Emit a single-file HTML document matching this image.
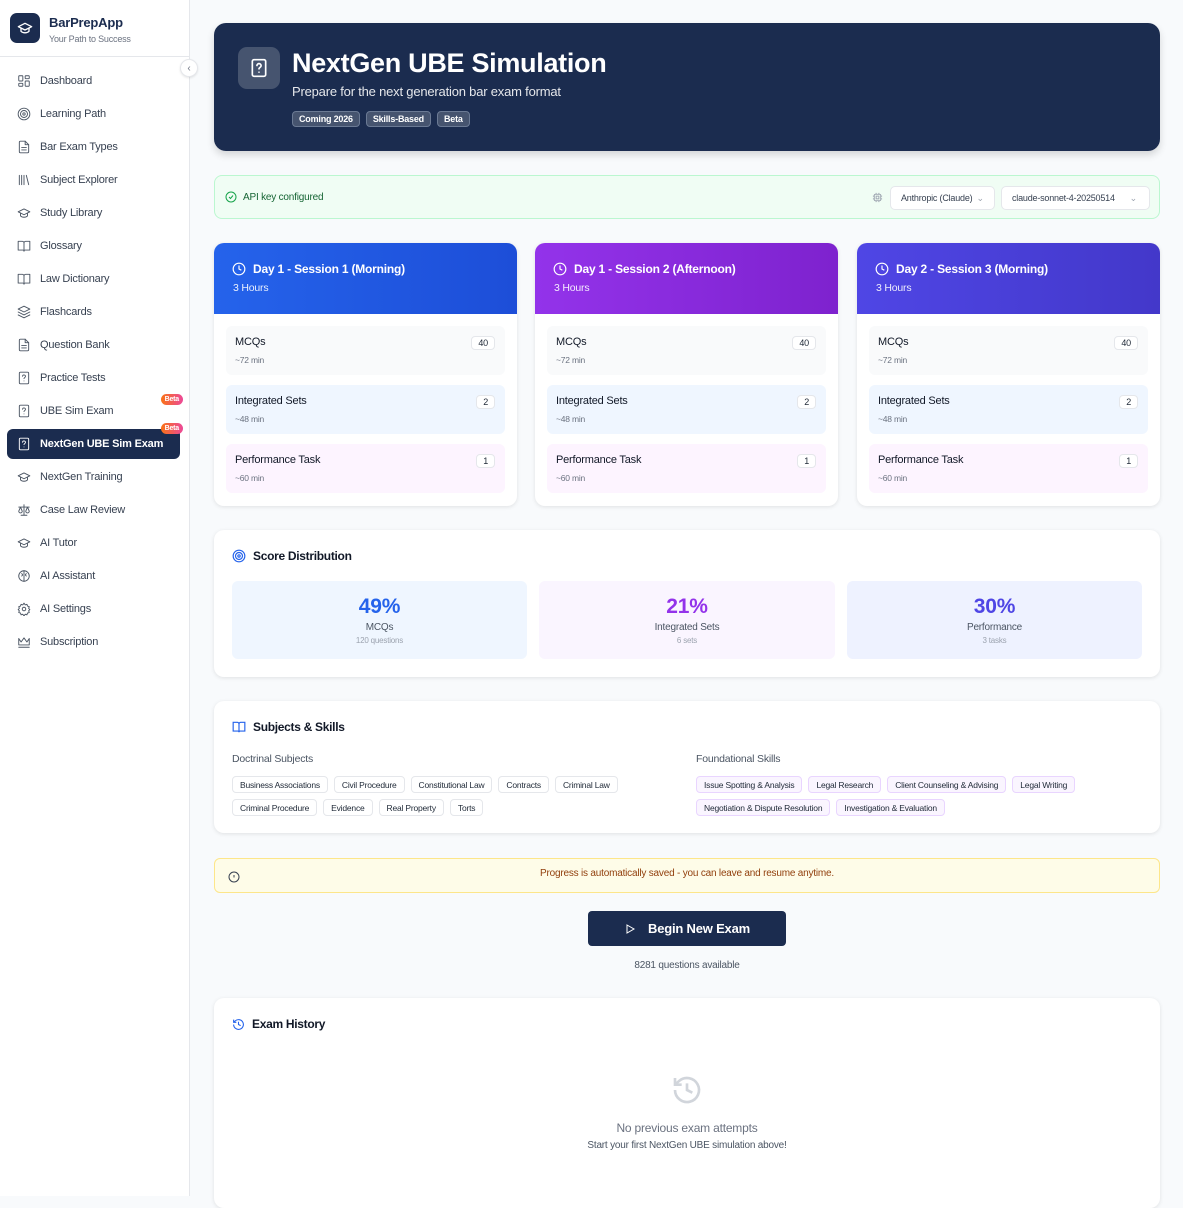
<!DOCTYPE html>
<html><head><meta charset="utf-8">
<style>
*{box-sizing:border-box;margin:0;padding:0}
body{width:1183px;height:1196px;overflow:hidden;font-family:"Liberation Sans",sans-serif;background:#f8fafc;color:#1f2937;position:relative;letter-spacing:-0.2px}
.sb{position:absolute;left:0;top:0;width:190px;height:1196px;background:#fff;border-right:1px solid #e5e7eb}
.logo{position:absolute;left:10px;top:13px;width:30px;height:30px;border-radius:7px;background:#1b2c4f;display:flex;align-items:center;justify-content:center}
.brand{position:absolute;left:49px;top:15px;font-weight:bold;font-size:13px;color:#1b2c4f}
.tag{position:absolute;left:49px;top:34px;font-size:9px;color:#6b7280}
.sep{position:absolute;left:0;top:56px;width:189px;border-top:1px solid #e5e7eb}
.coll{position:absolute;left:180px;top:59px;width:18px;height:18px;border-radius:50%;background:#fff;border:1px solid #e5e7eb;box-shadow:0 1px 2px rgba(0,0,0,.1);font-size:10px;color:#6b7280;display:flex;align-items:center;justify-content:center}
.nav{position:absolute;left:7px;width:173px;height:30px;display:flex;align-items:center;padding-left:10px;font-size:11px;color:#374151;border-radius:6px}
.nav svg{width:14px;height:14px;margin-right:9px;stroke:#4b5563;fill:none;stroke-width:1.6;stroke-linecap:round;stroke-linejoin:round}
.nav.act{background:#1b2c4f;color:#fff;font-weight:bold}
.nav.act svg{stroke:#fff}
.beta{position:absolute;right:-3px;top:-6px;background:linear-gradient(90deg,#f97316,#ec4899);color:#fff;font-size:7px;font-weight:bold;padding:2px 4px;border-radius:7px}
.hdr{position:absolute;left:214px;top:23px;width:946px;height:128px;background:#1b2c4f;border-radius:12px;box-shadow:0 4px 8px rgba(0,0,0,.15)}
.hico{position:absolute;left:24px;top:24px;width:42px;height:42px;border-radius:9px;background:#46546f;display:flex;align-items:center;justify-content:center}
.htitle{position:absolute;left:78px;top:25px;color:#fff;font-size:27px;font-weight:bold;letter-spacing:-0.3px}
.hsub{position:absolute;left:78px;top:61px;color:#e5e7eb;font-size:13px}
.pills{position:absolute;left:78px;top:88px;display:flex;gap:6px}
.pill{font-size:9px;font-weight:bold;color:#fff;background:#46546f;border:1px solid #6b7a94;border-radius:4px;padding:2px 6px}
.api{position:absolute;left:214px;top:175px;width:946px;height:44px;background:#f0fdf4;border:1px solid #bbf7d0;border-radius:8px}
.sel{position:absolute;top:10px;height:24px;background:#fff;border:1px solid #e5e7eb;border-radius:5px;font-size:9px;color:#374151;display:flex;align-items:center;padding-left:10px}
.card{position:absolute;background:#fff;border-radius:10px;box-shadow:0 1px 4px rgba(0,0,0,.1)}
.sess{top:243px;width:303px;height:263px;overflow:hidden}
.sh{height:71px;padding:19px 0 0 18px;color:#fff}
.sh b{font-size:12px;display:flex;align-items:center}
.sh b svg{margin-right:7px}
.sh div{font-size:10.5px;margin-top:6px;padding-left:1px;opacity:.9}
.it{position:absolute;left:12px;width:279px;height:49px;border-radius:6px;padding:10px 9px}
.it .n{font-size:11px;color:#111827}
.it .m{font-size:8.5px;color:#6b7280;margin-top:7px}
.it .c{position:absolute;right:10px;top:10px;font-size:9px;border:1px solid #e5e7eb;background:#fff;border-radius:4px;padding:1px 6px}
.h3{position:absolute;left:18px;top:19px;font-size:12px;font-weight:bold;color:#111827;display:flex;align-items:center;letter-spacing:-0.3px}
.h3 svg{margin-right:7px}
.sbox{position:absolute;top:51px;width:295px;height:78px;border-radius:6px;text-align:center}
.sbox .p{font-size:21px;font-weight:bold;margin-top:14px}
.sbox .l{font-size:10px;color:#4b5563;margin-top:3px}
.sbox .s{font-size:8px;color:#9ca3af;margin-top:3px}
.lab{position:absolute;top:52px;font-size:10.5px;color:#4b5563}
.chips{position:absolute;top:75px;display:flex;flex-wrap:wrap;gap:6px 6px}
.chip{font-size:8.5px;color:#1f2937;border:1px solid #e5e7eb;border-radius:4px;padding:3px 7px;background:#fff;height:17px}
.chip.v{background:#faf5ff;border-color:#e9d5ff}
</style></head><body>
<div class="sb">
<div class="logo"><svg width="16" height="16" viewBox="0 0 24 24" fill="none" stroke="#fff" stroke-width="2" stroke-linecap="round" stroke-linejoin="round"><path d="M22 10 12 5 2 10l10 5 10-5z"/><path d="M6 12v5c3 3 9 3 12 0v-5"/></svg></div>
<div class="brand">BarPrepApp</div><div class="tag">Your Path to Success</div>
<div class="sep"></div><div class="coll">‹</div>
<div class="nav" style="top:66px"><svg viewBox="0 0 24 24"><rect x="3" y="3" width="7" height="9" rx="1"/><rect x="14" y="3" width="7" height="5" rx="1"/><rect x="14" y="12" width="7" height="9" rx="1"/><rect x="3" y="16" width="7" height="5" rx="1"/></svg>Dashboard</div>
<div class="nav" style="top:99px"><svg viewBox="0 0 24 24"><circle cx="12" cy="12" r="10"/><circle cx="12" cy="12" r="6"/><circle cx="12" cy="12" r="2"/></svg>Learning Path</div>
<div class="nav" style="top:132px"><svg viewBox="0 0 24 24"><path d="M14 2H6a2 2 0 0 0-2 2v16a2 2 0 0 0 2 2h12a2 2 0 0 0 2-2V8z"/><path d="M14 2v6h6M16 13H8M16 17H8"/></svg>Bar Exam Types</div>
<div class="nav" style="top:165px"><svg viewBox="0 0 24 24"><path d="M4 4v16M8 4v16M12 4v16M16 4l4 16"/></svg>Subject Explorer</div>
<div class="nav" style="top:198px"><svg viewBox="0 0 24 24"><path d="M22 10 12 5 2 10l10 5 10-5z"/><path d="M6 12v5c3 3 9 3 12 0v-5"/></svg>Study Library</div>
<div class="nav" style="top:231px"><svg viewBox="0 0 24 24"><path d="M2 4h7a3 3 0 0 1 3 3v14a2 2 0 0 0-2-2H2zM22 4h-7a3 3 0 0 0-3 3v14a2 2 0 0 1 2-2h8z"/></svg>Glossary</div>
<div class="nav" style="top:264px"><svg viewBox="0 0 24 24"><path d="M2 4h7a3 3 0 0 1 3 3v14a2 2 0 0 0-2-2H2zM22 4h-7a3 3 0 0 0-3 3v14a2 2 0 0 1 2-2h8z"/></svg>Law Dictionary</div>
<div class="nav" style="top:297px"><svg viewBox="0 0 24 24"><path d="M12 2 2 7l10 5 10-5z"/><path d="m2 12 10 5 10-5M2 17l10 5 10-5"/></svg>Flashcards</div>
<div class="nav" style="top:330px"><svg viewBox="0 0 24 24"><path d="M14 2H6a2 2 0 0 0-2 2v16a2 2 0 0 0 2 2h12a2 2 0 0 0 2-2V8z"/><path d="M14 2v6h6M16 13H8M16 17H8"/></svg>Question Bank</div>
<div class="nav" style="top:363px"><svg viewBox="0 0 24 24"><rect x="4" y="2" width="16" height="20" rx="2"/><path d="M9.5 9a2.5 2.5 0 0 1 5 .5c0 1.5-2.5 2-2.5 3.5M12 17h.01"/></svg>Practice Tests</div>
<div class="nav" style="top:396px"><svg viewBox="0 0 24 24"><rect x="4" y="2" width="16" height="20" rx="2"/><path d="M9.5 9a2.5 2.5 0 0 1 5 .5c0 1.5-2.5 2-2.5 3.5M12 17h.01"/></svg>UBE Sim Exam<span class="beta" style="top:-2px">Beta</span></div>
<div class="nav act" style="top:429px"><svg viewBox="0 0 24 24"><rect x="4" y="2" width="16" height="20" rx="2"/><path d="M9.5 9a2.5 2.5 0 0 1 5 .5c0 1.5-2.5 2-2.5 3.5M12 17h.01"/></svg>NextGen UBE Sim Exam<span class="beta">Beta</span></div>
<div class="nav" style="top:462px"><svg viewBox="0 0 24 24"><path d="M22 10 12 5 2 10l10 5 10-5z"/><path d="M6 12v5c3 3 9 3 12 0v-5"/></svg>NextGen Training</div>
<div class="nav" style="top:495px"><svg viewBox="0 0 24 24"><path d="M12 3v18M7 21h10M3 7h18M6 7l-3 7a3 3 0 0 0 6 0zM18 7l-3 7a3 3 0 0 0 6 0z"/></svg>Case Law Review</div>
<div class="nav" style="top:528px"><svg viewBox="0 0 24 24"><path d="M22 10 12 5 2 10l10 5 10-5z"/><path d="M6 12v5c3 3 9 3 12 0v-5"/></svg>AI Tutor</div>
<div class="nav" style="top:561px"><svg viewBox="0 0 24 24"><circle cx="12" cy="12" r="9"/><path d="M12 3v18M8 8c2 1 2 3 0 4M16 8c-2 1-2 3 0 4"/></svg>AI Assistant</div>
<div class="nav" style="top:594px"><svg viewBox="0 0 24 24"><circle cx="12" cy="12" r="3"/><path d="M12 2l2 3 3-1 1 3 3 1-1 3 2 2-2 2 1 3-3 1-1 3-3-1-2 3-2-3-3 1-1-3-3-1 1-3-2-2 2-2-1-3 3-1 1-3 3 1z"/></svg>AI Settings</div>
<div class="nav" style="top:627px"><svg viewBox="0 0 24 24"><path d="M3 6l4 6 5-7 5 7 4-6v11H3zM3 21h18"/></svg>Subscription</div>
</div>

<div class="hdr">
<div class="hico"><svg width="20" height="20" viewBox="0 0 24 24" fill="none" stroke="#fff" stroke-width="2" stroke-linecap="round" stroke-linejoin="round"><rect x="4" y="2" width="16" height="20" rx="2"/><path d="M9.5 9a2.5 2.5 0 0 1 5 .5c0 1.5-2.5 2-2.5 3.5M12 17h.01"/></svg></div>
<div class="htitle">NextGen UBE Simulation</div>
<div class="hsub">Prepare for the next generation bar exam format</div>
<div class="pills"><span class="pill">Coming 2026</span><span class="pill">Skills-Based</span><span class="pill">Beta</span></div>
</div>

<div class="api">
<div style="position:absolute;left:10px;top:15px;font-size:10px;color:#166534;display:flex;align-items:center"><svg width="12" height="12" viewBox="0 0 24 24" fill="none" stroke="#16a34a" stroke-width="2"><circle cx="12" cy="12" r="10"/><path d="m8 12 3 3 5-6"/></svg><span style="margin-left:6px">API key configured</span></div>
<svg style="position:absolute;left:657px;top:16px" width="11" height="11" viewBox="0 0 24 24" fill="none" stroke="#9ca3af" stroke-width="2"><rect x="5" y="5" width="14" height="14" rx="2"/><rect x="9" y="9" width="6" height="6"/><path d="M9 2v3M15 2v3M9 19v3M15 19v3M2 9h3M2 15h3M19 9h3M19 15h3"/></svg>
<div class="sel" style="left:675px;width:105px">Anthropic (Claude) <span style="margin-left:4px;color:#9ca3af">⌄</span></div>
<div class="sel" style="left:786px;width:149px">claude-sonnet-4-20250514<span style="position:absolute;right:12px;color:#9ca3af">⌄</span></div>
</div>

<div class="card sess" style="left:214px">
<div class="sh" style="background:linear-gradient(90deg,#2563eb,#1d4ed8)"><b><svg width="14" height="14" viewBox="0 0 24 24" fill="none" stroke="#fff" stroke-width="2"><circle cx="12" cy="12" r="10"/><path d="M12 6v6l4 2"/></svg>Day 1 - Session 1 (Morning)</b><div>3 Hours</div></div>
<div class="it" style="top:83px;background:#f9fafb"><div class="n">MCQs</div><div class="m">~72 min</div><span class="c">40</span></div>
<div class="it" style="top:142px;background:#eff6ff"><div class="n">Integrated Sets</div><div class="m">~48 min</div><span class="c">2</span></div>
<div class="it" style="top:201px;background:#fdf4ff"><div class="n">Performance Task</div><div class="m">~60 min</div><span class="c">1</span></div>
</div>
<div class="card sess" style="left:535px">
<div class="sh" style="background:linear-gradient(90deg,#9333ea,#7e22ce)"><b><svg width="14" height="14" viewBox="0 0 24 24" fill="none" stroke="#fff" stroke-width="2"><circle cx="12" cy="12" r="10"/><path d="M12 6v6l4 2"/></svg>Day 1 - Session 2 (Afternoon)</b><div>3 Hours</div></div>
<div class="it" style="top:83px;background:#f9fafb"><div class="n">MCQs</div><div class="m">~72 min</div><span class="c">40</span></div>
<div class="it" style="top:142px;background:#eff6ff"><div class="n">Integrated Sets</div><div class="m">~48 min</div><span class="c">2</span></div>
<div class="it" style="top:201px;background:#fdf4ff"><div class="n">Performance Task</div><div class="m">~60 min</div><span class="c">1</span></div>
</div>
<div class="card sess" style="left:857px">
<div class="sh" style="background:linear-gradient(90deg,#4f46e5,#4338ca)"><b><svg width="14" height="14" viewBox="0 0 24 24" fill="none" stroke="#fff" stroke-width="2"><circle cx="12" cy="12" r="10"/><path d="M12 6v6l4 2"/></svg>Day 2 - Session 3 (Morning)</b><div>3 Hours</div></div>
<div class="it" style="top:83px;background:#f9fafb"><div class="n">MCQs</div><div class="m">~72 min</div><span class="c">40</span></div>
<div class="it" style="top:142px;background:#eff6ff"><div class="n">Integrated Sets</div><div class="m">~48 min</div><span class="c">2</span></div>
<div class="it" style="top:201px;background:#fdf4ff"><div class="n">Performance Task</div><div class="m">~60 min</div><span class="c">1</span></div>
</div>

<div class="card" style="left:214px;top:530px;width:946px;height:147px">
<div class="h3"><svg width="14" height="14" viewBox="0 0 24 24" fill="none" stroke="#2563eb" stroke-width="2"><circle cx="12" cy="12" r="10"/><circle cx="12" cy="12" r="6"/><circle cx="12" cy="12" r="2"/></svg>Score Distribution</div>
<div class="sbox" style="left:18px;background:#eff6ff"><div class="p" style="color:#2563eb">49%</div><div class="l">MCQs</div><div class="s">120 questions</div></div>
<div class="sbox" style="left:325px;width:296px;background:#faf5ff"><div class="p" style="color:#9333ea">21%</div><div class="l">Integrated Sets</div><div class="s">6 sets</div></div>
<div class="sbox" style="left:633px;background:#eef2ff"><div class="p" style="color:#4f46e5">30%</div><div class="l">Performance</div><div class="s">3 tasks</div></div>
</div>

<div class="card" style="left:214px;top:701px;width:946px;height:132px">
<div class="h3"><svg width="14" height="14" viewBox="0 0 24 24" fill="none" stroke="#2563eb" stroke-width="2"><path d="M2 4h7a3 3 0 0 1 3 3v14a2 2 0 0 0-2-2H2zM22 4h-7a3 3 0 0 0-3 3v14a2 2 0 0 1 2-2h8z"/></svg>Subjects &amp; Skills</div>
<div class="lab" style="left:18px">Doctrinal Subjects</div>
<div class="chips" style="left:18px;width:460px"><span class="chip">Business Associations</span><span class="chip">Civil Procedure</span><span class="chip">Constitutional Law</span><span class="chip">Contracts</span><span class="chip">Criminal Law</span><span class="chip">Criminal Procedure</span><span class="chip">Evidence</span><span class="chip">Real Property</span><span class="chip">Torts</span></div>
<div class="lab" style="left:482px">Foundational Skills</div>
<div class="chips" style="left:482px;width:450px"><span class="chip v">Issue Spotting &amp; Analysis</span><span class="chip v">Legal Research</span><span class="chip v">Client Counseling &amp; Advising</span><span class="chip v">Legal Writing</span><span class="chip v">Negotiation &amp; Dispute Resolution</span><span class="chip v">Investigation &amp; Evaluation</span></div>
</div>

<div style="position:absolute;left:214px;top:858px;width:946px;height:35px;background:#fefce8;border:1px solid #fde68a;border-radius:6px">
<svg style="position:absolute;left:13px;top:12px" width="12" height="12" viewBox="0 0 24 24" fill="none" stroke="#374151" stroke-width="2"><circle cx="12" cy="12" r="10"/><path d="M12 8v5M12 16h.01"/></svg>
<div style="text-align:center;font-size:10px;color:#92400e;line-height:29px">Progress is automatically saved - you can leave and resume anytime.</div>
</div>

<div style="position:absolute;left:588px;top:911px;width:198px;height:35px;background:#1b2c4f;border-radius:4px;color:#fff;font-weight:bold;font-size:13px;display:flex;align-items:center;justify-content:center"><svg width="12" height="12" viewBox="0 0 24 24" fill="none" stroke="#fff" stroke-width="2" style="margin-right:12px"><path d="M6 4l14 8-14 8z"/></svg>Begin New Exam</div>
<div style="position:absolute;left:588px;width:198px;top:960px;text-align:center;font-size:10px;color:#4b5563">8281 questions available</div>

<div class="card" style="left:214px;top:998px;width:946px;height:210px">
<div class="h3"><svg width="13" height="13" viewBox="0 0 24 24" fill="none" stroke="#2563eb" stroke-width="2"><path d="M3 12a9 9 0 1 0 3-6.7L3 8M3 3v5h5M12 7v5l4 2"/></svg>Exam History</div>
<svg style="position:absolute;left:457px;top:76px" width="32" height="32" viewBox="0 0 24 24" fill="none" stroke="#d1d5db" stroke-width="2"><path d="M3 12a9 9 0 1 0 3-6.7L3 8M3 3v5h5M12 7v5l4 2"/></svg>
<div style="position:absolute;left:0;width:946px;top:123px;text-align:center;font-size:12px;color:#6b7280">No previous exam attempts</div>
<div style="position:absolute;left:0;width:946px;top:142px;text-align:center;font-size:10px;color:#4b5563">Start your first NextGen UBE simulation above!</div>
</div>
</body></html>
